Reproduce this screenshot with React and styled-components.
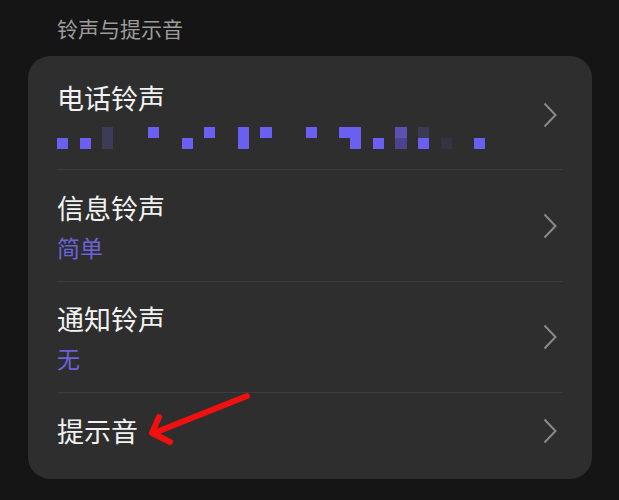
import React from "react";
import styled, { createGlobalStyle } from "styled-components";

const Global = createGlobalStyle`
  html, body { margin: 0; padding: 0; background: #151515; }
  body { font-family: "Noto Sans CJK SC", "Noto Sans", sans-serif; }
`;

const Page = styled.div`
  position: relative;
  width: 619px;
  height: 500px;
  background: #151515;
  padding: 14px 27px 0 28px;
  box-sizing: border-box;
  overflow: hidden;
`;

const Header = styled.div`
  padding-left: 29px;
  font-size: 21px;
  line-height: 28px;
  color: #9c9c9c;
  margin-bottom: 14px;
`;

const Card = styled.div`
  background: #2e2e2e;
  border-radius: 22px;
  display: flex;
  flex-direction: column;
`;

const Row = styled.div`
  display: flex;
  align-items: center;
  justify-content: space-between;
  margin: 0 29px;
  padding: ${(p) => p.$pt}px 0 ${(p) => p.$pb}px 0;
  border-bottom: ${(p) => (p.$last ? "none" : "1px solid #3d3d3d")};
`;

const Texts = styled.div`
  display: flex;
  flex-direction: column;
`;

const Title = styled.div`
  font-size: 27px;
  line-height: 35px;
  color: #f2f2f2;
`;

const Sub = styled.div`
  font-size: 23px;
  line-height: 30px;
  color: #6c62d9;
  margin-top: 7px;
`;

const Mosaic = styled.svg`
  display: block;
  margin-top: 12px;
`;

const Chevron = styled.svg`
  flex: none;
  margin-right: 6px;
`;

const Arrow = styled.svg`
  position: absolute;
  left: 0;
  top: 0;
  pointer-events: none;
`;

const ChevronIcon = () => (
  <Chevron width="14" height="26" viewBox="0 0 14 26">
    <polyline points="1.5,1.5 12.5,13 1.5,24.5" fill="none" stroke="#8a8a8a" strokeWidth="2" />
  </Chevron>
);

const cells = [
  [0, 11, 11, 11, "#6a5ff0"],
  [23, 11, 11, 11, "#6a5ff0"],
  [45, 0, 11, 22, "#3e3b58"],
  [91, 0, 11, 11, "#6a5ff0"],
  [125, 11, 11, 11, "#6a5ff0"],
  [147, 0, 11, 11, "#6a5ff0"],
  [181, 0, 11, 22, "#6a5ff0"],
  [203, 0, 12, 11, "#6a5ff0"],
  [249, 0, 11, 11, "#6a5ff0"],
  [282, 0, 22, 11, "#6a5ff0"],
  [293, 11, 11, 11, "#6a5ff0"],
  [316, 11, 11, 11, "#6a5ff0"],
  [338, 0, 12, 11, "#5a51b0"],
  [338, 11, 12, 11, "#4a4490"],
  [361, 0, 11, 11, "#3d3a55"],
  [361, 11, 11, 11, "#6a5ff0"],
  [384, 11, 11, 11, "#34333f"],
  [417, 11, 11, 11, "#6a5ff0"],
];

const rows = [
  { title: "电话铃声", mosaic: true, pt: 24, pb: 20 },
  { title: "信息铃声", sub: "简单", pt: 20, pb: 19 },
  { title: "通知铃声", sub: "无", pt: 19, pb: 19 },
  { title: "提示音", pt: 20, pb: 31, last: true },
];

export default function App() {
  return (
    <>
      <Global />
      <Page>
        <Header>铃声与提示音</Header>
        <Card>
          {rows.map((r) => (
            <Row key={r.title} $pt={r.pt} $pb={r.pb} $last={r.last}>
              <Texts>
                <Title>{r.title}</Title>
                {r.sub && <Sub>{r.sub}</Sub>}
                {r.mosaic && (
                  <Mosaic width="430" height="22" viewBox="0 0 430 22">
                    {cells.map(([x, y, w, h, c], i) => (
                      <rect key={i} x={x} y={y} width={w} height={h} fill={c} />
                    ))}
                  </Mosaic>
                )}
              </Texts>
              <ChevronIcon />
            </Row>
          ))}
        </Card>
        <Arrow width="619" height="500" viewBox="0 0 619 500">
          <g fill="none" stroke="#f01010" strokeWidth="6" strokeLinecap="round" strokeLinejoin="round">
            <line x1="247" y1="396" x2="154" y2="433" />
            <polyline points="159,417 152,433 170,442" />
          </g>
        </Arrow>
      </Page>
    </>
  );
}
